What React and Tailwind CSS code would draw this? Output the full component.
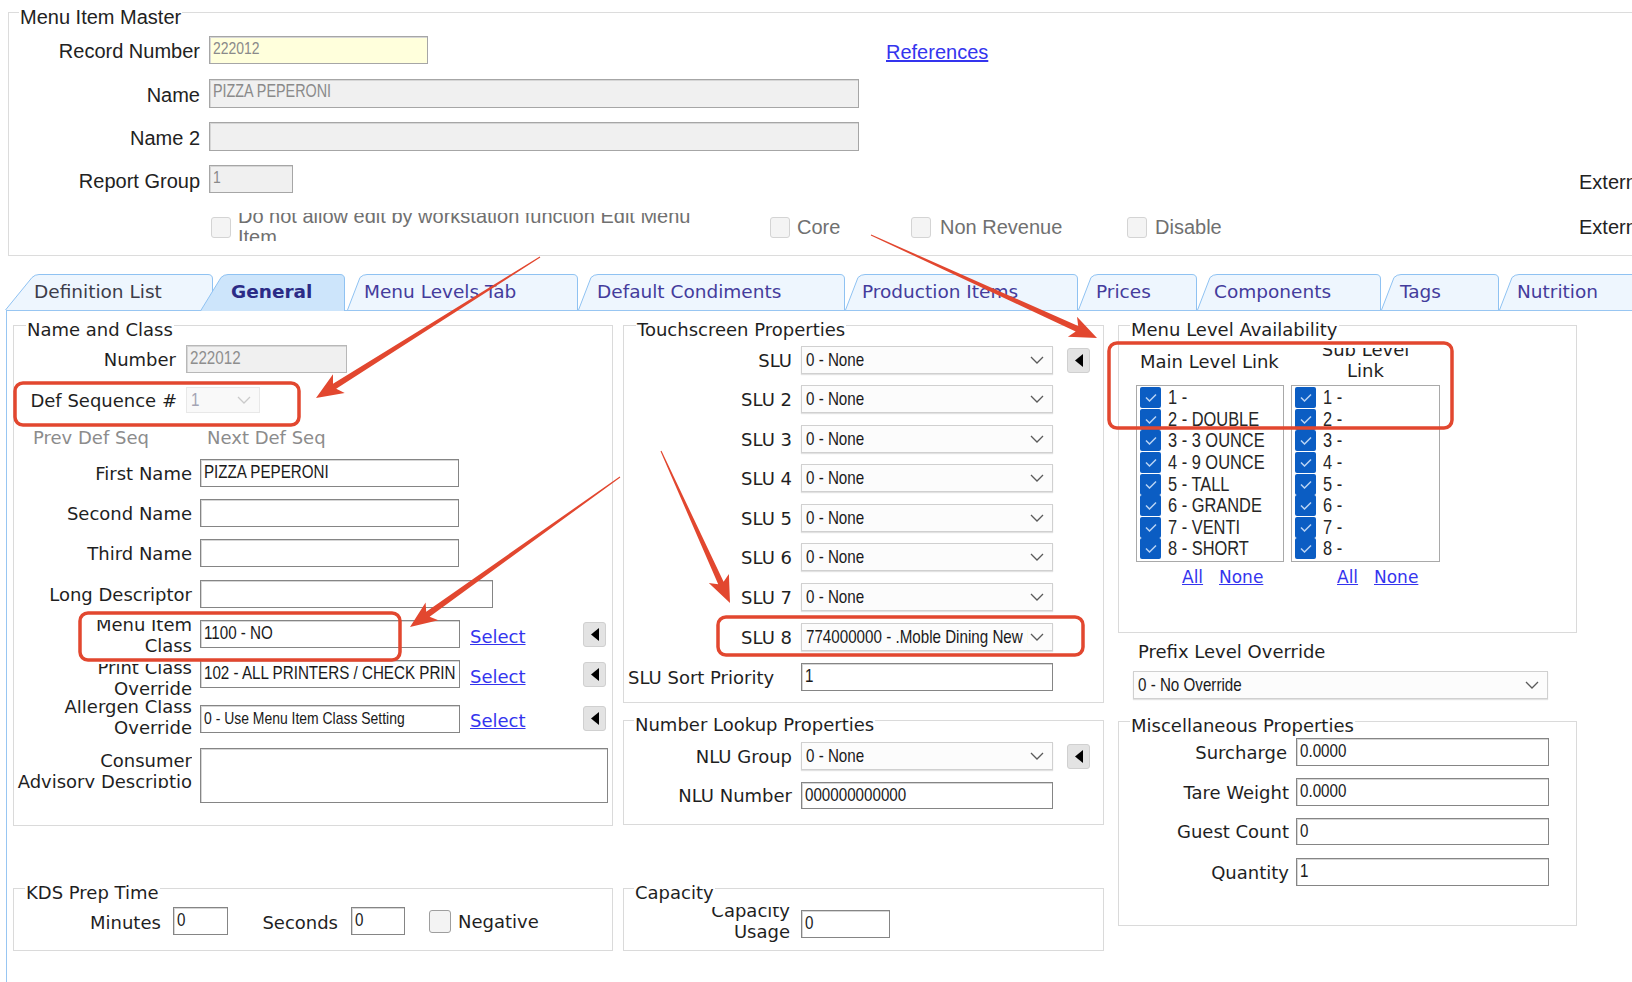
import React from "react";

// narrow face: Liberation Sans squeezed to Arial Narrow proportions
function Narrow({ children, className = "" }) {
  return (
    <span className={`inline-block origin-left scale-x-[0.82] whitespace-nowrap font-['Liberation_Sans',Arial,sans-serif] ${className}`}>
      {children}
    </span>
  );
}

function TextBox({ className = "", value = "", tone = "text-[#1a1a1a]", frame = "border-[#858585]", bg = "bg-white", size = "text-[18.5px]" }) {
  return (
    <div
      className={`shrink-0 overflow-hidden whitespace-nowrap border px-[3px] leading-[23px] shadow-[inset_1px_1px_0_#d6d6d6] ${frame} ${bg} ${tone} ${className}`}
    >
      <Narrow className={size}>{value}</Narrow>
    </div>
  );
}

function Combo({ className = "", value = "", disabled = false }) {
  return (
    <div
      className={`flex shrink-0 items-center border ${
        disabled
          ? "border-[#e8e8e8] bg-[#f9f9f9] text-[#a4a4b4]"
          : "border-[#d0d0d0] bg-[#fcfcfc] text-[#1a1a1a] shadow-[0_1px_1px_#e2e2e2]"
      } ${className}`}
    >
      <span className="min-w-0 flex-1 overflow-hidden whitespace-nowrap pl-[4px] leading-[24px]">
        <Narrow className="text-[18.5px]">{value}</Narrow>
      </span>
      <svg width="14" height="8" viewBox="0 0 14 8" className="ml-[2px] mr-[8px] shrink-0">
        <polyline points="1,1 7,7 13,1" fill="none" stroke={disabled ? "#cacaca" : "#5a5a5a"} strokeWidth="1.3" />
      </svg>
    </div>
  );
}

function ArrowBtn({ className = "" }) {
  return (
    <div
      className={`flex h-[25px] w-[23px] shrink-0 items-center justify-center rounded-[3px] border border-[#d0d0d0] bg-[#e3e3e3] ${className}`}
    >
      <svg width="8" height="13" viewBox="0 0 8 13">
        <polygon points="8,0 8,13 0,6.5" fill="#000" />
      </svg>
    </div>
  );
}

function Box({ className = "" }) {
  return <div className={`h-[21px] w-[20px] shrink-0 rounded-[3px] border border-[#d4d4d4] bg-[#f4f4f4] ${className}`} />;
}

function Group({ title, className = "", titleClass = "ml-[12px]", children }) {
  return (
    <div className={`border border-[#dadada] ${className}`}>
      <div className={`-mt-[7px] h-[22px] w-fit bg-white px-[1px] leading-[22px] ${titleClass}`}>{title}</div>
      {children}
    </div>
  );
}

function Link({ children, className = "" }) {
  return <span className={`text-[#3434ee] underline ${className}`}>{children}</span>;
}

const TABS = [
  { label: "Definition List", cls: "w-[208px]", pad: "pl-[29px] text-[#3d3d4a]", slant: 30, w: 208 },
  { label: "General", cls: "-ml-[13px] w-[145px]", pad: "pl-[31px] font-bold text-[#2b2b86]", slant: 24, w: 145, selected: true },
  { label: "Menu Levels Tab", cls: "ml-[2px] w-[231px]", pad: "pl-[17px] text-[#443c9c]", slant: 16, w: 231 },
  { label: "Default Condiments", cls: "w-[267px]", pad: "pl-[19px] text-[#443c9c]", slant: 16, w: 267 },
  { label: "Production Items", cls: "w-[233px]", pad: "pl-[17px] text-[#443c9c]", slant: 16, w: 233 },
  { label: "Prices", cls: "w-[119px]", pad: "pl-[18px] text-[#443c9c]", slant: 16, w: 119 },
  { label: "Components", cls: "w-[184px]", pad: "pl-[17px] text-[#443c9c]", slant: 16, w: 184 },
  { label: "Tags", cls: "w-[118px]", pad: "pl-[19px] text-[#443c9c]", slant: 16, w: 118 },
  { label: "Nutrition", cls: "w-[150px]", pad: "pl-[18px] text-[#443c9c]", slant: 16, w: 150 },
];

function Tab({ tab }) {
  const { w, slant: s, selected } = tab;
  const h = selected ? 37 : 36;
  const d = `M0.5,${h} L${s - 3},3.5 Q${s},0.5 ${s + 4},0.5 L${w - 5},0.5 Q${w - 0.5},0.5 ${w - 0.5},5 L${w - 0.5},${h}`;
  return (
    <div className={`relative h-[36px] shrink-0 ${tab.cls}`}>
      <svg className="absolute left-0 top-0" width={w} height={h} viewBox={`0 0 ${w} ${h}`}>
        <path d={d} fill={selected ? "#cde5fb" : "#eef6fe"} stroke="#8fc2f2" strokeWidth="1" />
      </svg>
      <div className={`relative whitespace-nowrap text-[18.5px] leading-[36px] ${tab.pad}`}>{tab.label}</div>
    </div>
  );
}

const MAIN_LEVELS = ["1 -", "2 - DOUBLE", "3 - 3 OUNCE", "4 - 9 OUNCE", "5 - TALL", "6 - GRANDE", "7 - VENTI", "8 - SHORT"];
const SUB_LEVELS = ["1 -", "2 -", "3 -", "4 -", "5 -", "6 -", "7 -", "8 -"];

function LevelList({ items, className = "" }) {
  return (
    <div className={`h-[177px] shrink-0 overflow-hidden border border-[#a9a9a9] pl-[3px] pt-[1px] ${className}`}>
      {items.map((it) => (
        <div key={it} className="flex h-[21.6px] items-center">
          <div className="flex h-[21px] w-[21px] shrink-0 items-center justify-center rounded-[2px] bg-[#0b5dc3]">
            <svg width="12" height="9" viewBox="0 0 12 9">
              <polyline points="1,4.5 4.5,8 11,1.5" fill="none" stroke="#b9d3f3" strokeWidth="1.5" />
            </svg>
          </div>
          <span className="ml-[7px] leading-[21px] text-[#262626]">
            <Narrow className="text-[20px]">{it}</Narrow>
          </span>
        </div>
      ))}
    </div>
  );
}

function TopSection() {
  return (
    <div className="ml-[8px] mt-[12px] h-[244px] w-[1700px] border border-[#dcdcdc] font-['Liberation_Sans',Arial,sans-serif] text-[20px] text-[#222]">
      <div className="-mt-[7px] ml-[10px] h-[22px] w-fit bg-white px-[1px] leading-[22px]">Menu Item Master</div>

      <div className="mt-[8px] flex h-[28px] items-center">
        <div className="w-[191px] pt-[2px] text-right leading-[22px]">Record Number</div>
        <TextBox className="ml-[9px] h-[28px] w-[219px] !leading-[20px]" size="text-[17px]" bg="bg-[#ffffdc]" frame="border-[#a6a6a6]" tone="text-[#8a8a8a]" value="222012" />
        <Link className="ml-[458px] pt-[4px] leading-[22px]">References</Link>
      </div>

      <div className="mt-[15px] flex h-[29px] items-center">
        <div className="w-[191px] pt-[2px] text-right leading-[22px]">Name</div>
        <TextBox className="ml-[9px] h-[29px] w-[650px] !leading-[20px]" size="text-[17.5px]" bg="bg-[#f0f0f0]" frame="border-[#a6a6a6]" tone="text-[#8a8a8a]" value="PIZZA PEPERONI" />
      </div>

      <div className="mt-[14px] flex h-[29px] items-center">
        <div className="w-[191px] pt-[2px] text-right leading-[22px]">Name 2</div>
        <TextBox className="ml-[9px] h-[29px] w-[650px]" bg="bg-[#f0f0f0]" frame="border-[#a6a6a6]" value="" />
      </div>

      <div className="mt-[14px] flex h-[28px] items-center">
        <div className="w-[191px] pt-[3px] text-right leading-[22px]">Report Group</div>
        <TextBox className="ml-[9px] h-[28px] w-[84px] !leading-[20px]" size="text-[17px]" bg="bg-[#f0f0f0]" frame="border-[#a6a6a6]" tone="text-[#8a8a8a]" value="1" />
        <div className="ml-[1286px] whitespace-nowrap pt-[5px] leading-[22px]">External</div>
      </div>

      <div className="mt-[23px] flex h-[22px] items-center">
        <Box className="ml-[202px]" />
        <div className="ml-[7px] flex h-[28px] w-[525px] shrink-0 flex-col justify-center overflow-hidden whitespace-nowrap text-[20px] leading-[21px] text-[#707070]">
          <div>Do not allow edit by workstation function Edit Menu</div>
          <div>Item</div>
        </div>
        <Box className="ml-[7px]" />
        <div className="ml-[7px] w-[107px] shrink-0 text-[#707070]">Core</div>
        <Box className="ml-[7px]" />
        <div className="ml-[9px] w-[180px] shrink-0 text-[#707070]">Non Revenue</div>
        <Box className="ml-[7px]" />
        <div className="ml-[8px] w-[424px] shrink-0 text-[#707070]">Disable</div>
        <div className="whitespace-nowrap">External</div>
      </div>
    </div>
  );
}

function ColumnOne() {
  return (
    <div className="ml-[6px] mt-[14px] w-[600px] shrink-0">
      <Group title="Name and Class" className="h-[501px]">
        <div className="mt-[4px] flex h-[28px] items-center">
          <div className="w-[162px] text-right">Number</div>
          <TextBox className="ml-[10px] h-[28px] w-[161px]" bg="bg-[#f0f0f0]" frame="border-[#b8b8b8]" tone="text-[#8e8e8e]" value="222012" />
        </div>
        <div className="mt-[14px] flex h-[26px] items-center">
          <div className="w-[163px] text-right">Def Sequence #</div>
          <Combo className="ml-[9px] h-[26px] w-[74px]" value="1" disabled />
        </div>
        <div className="mt-[13px] flex h-[22px] items-center text-[#8c8c8c]">
          <div className="ml-[19px] w-[174px]">Prev Def Seq</div>
          <div>Next Def Seq</div>
        </div>
        <div className="mt-[11px] flex h-[28px] items-center">
          <div className="w-[178px] text-right">First Name</div>
          <TextBox className="ml-[8px] h-[28px] w-[259px]" value="PIZZA PEPERONI" />
        </div>
        <div className="mt-[12px] flex h-[28px] items-center">
          <div className="w-[178px] text-right">Second Name</div>
          <TextBox className="ml-[8px] h-[28px] w-[259px]" value="" />
        </div>
        <div className="mt-[12px] flex h-[28px] items-center">
          <div className="w-[178px] text-right">Third Name</div>
          <TextBox className="ml-[8px] h-[28px] w-[259px]" value="" />
        </div>
        <div className="mt-[13px] flex h-[28px] items-center">
          <div className="w-[178px] text-right">Long Descriptor</div>
          <TextBox className="ml-[8px] h-[28px] w-[293px]" value="" />
        </div>

        <div className="mt-[12px] flex h-[28px] items-start">
          <div className="mt-[0px] flex h-[36px] w-[178px] shrink-0 flex-col justify-end overflow-hidden text-right leading-[21px]">
            <div>Menu Item</div>
            <div>Class</div>
          </div>
          <TextBox className="ml-[8px] h-[28px] w-[260px]" value="1100 - NO" />
          <div className="w-[123px] shrink-0 pl-[10px] pt-[6px] leading-[22px]">
            <Link>Select</Link>
          </div>
          <ArrowBtn className="mt-[2px]" />
        </div>

        <div className="mt-[12px] flex h-[28px] items-start">
          <div className="mt-[4px] flex h-[35px] w-[178px] shrink-0 flex-col justify-end overflow-hidden text-right leading-[21px]">
            <div>Print Class</div>
            <div>Override</div>
          </div>
          <TextBox className="ml-[8px] h-[28px] w-[260px]" value="102 - ALL PRINTERS / CHECK PRIN" />
          <div className="w-[123px] shrink-0 pl-[10px] pt-[6px] leading-[22px]">
            <Link>Select</Link>
          </div>
          <ArrowBtn className="mt-[2px]" />
        </div>

        <div className="mt-[17px] flex h-[28px] items-start">
          <div className="-mt-[5px] flex h-[38px] w-[178px] shrink-0 flex-col justify-end overflow-hidden text-right leading-[21px]">
            <div>Allergen Class</div>
            <div>Override</div>
          </div>
          <TextBox className="ml-[8px] h-[28px] w-[260px]" size="text-[17px]" value="0 - Use Menu Item Class Setting" />
          <div className="w-[123px] shrink-0 pl-[10px] pt-[5px] leading-[22px]">
            <Link>Select</Link>
          </div>
          <ArrowBtn className="mt-[1px]" />
        </div>

        <div className="mt-[15px] flex h-[55px] items-start">
          <div className="mt-[6px] flex h-[34px] w-[178px] shrink-0 flex-col justify-center overflow-hidden whitespace-nowrap text-right leading-[21px]">
            <div>Consumer</div>
            <div>Advisory Descriptio</div>
          </div>
          <TextBox className="ml-[8px] h-[55px] w-[408px]" value="" />
        </div>
      </Group>

      <Group title="KDS Prep Time" className="mt-[62px] h-[63px]" titleClass="ml-[11px]">
        <div className="mt-[3px] flex h-[28px] items-center">
          <div className="ml-[76px] w-[70px] shrink-0 pt-[3px] text-right">Minutes</div>
          <TextBox className="ml-[13px] h-[28px] w-[55px]" value="0" />
          <div className="ml-[32px] w-[78px] shrink-0 pt-[3px] text-right">Seconds</div>
          <TextBox className="ml-[13px] h-[28px] w-[54px]" value="0" />
          <div className="ml-[24px] h-[23px] w-[22px] shrink-0 rounded-[3px] border border-[#9e9e9e] bg-[#f3f3f3]" />
          <div className="ml-[7px]">Negative</div>
        </div>
      </Group>
    </div>
  );
}

const SLU_ROWS = [
  { label: "SLU", mt: "mt-[5px]", value: "0 - None", btn: true },
  { label: "SLU 2", mt: "mt-[11px]", value: "0 - None" },
  { label: "SLU 3", mt: "mt-[12px]", value: "0 - None" },
  { label: "SLU 4", mt: "mt-[11px]", value: "0 - None" },
  { label: "SLU 5", mt: "mt-[12px]", value: "0 - None" },
  { label: "SLU 6", mt: "mt-[11px]", value: "0 - None" },
  { label: "SLU 7", mt: "mt-[12px]", value: "0 - None" },
  { label: "SLU 8", mt: "mt-[12px]", value: "774000000 - .Moble Dining New Item" },
];

function ColumnTwo() {
  return (
    <div className="ml-[10px] mt-[14px] w-[481px] shrink-0">
      <Group title="Touchscreen Properties" className="h-[378px]">
        {SLU_ROWS.map((r) => (
          <div key={r.label} className={`flex h-[28px] items-center ${r.mt}`}>
            <div className="w-[168px] shrink-0 text-right">{r.label}</div>
            <Combo className="ml-[9px] h-[28px] w-[252px]" value={r.value} />
            {r.btn && <ArrowBtn className="ml-[14px]" />}
          </div>
        ))}
        <div className="mt-[12px] flex h-[28px] items-center">
          <div className="ml-[4px] w-[164px] shrink-0 whitespace-nowrap">SLU Sort Priority</div>
          <TextBox className="ml-[9px] h-[28px] w-[252px]" value="1" />
        </div>
      </Group>

      <Group title="Number Lookup Properties" className="mt-[17px] h-[105px]" titleClass="ml-[10px]">
        <div className="mt-[6px] flex h-[28px] items-center">
          <div className="w-[168px] shrink-0 text-right">NLU Group</div>
          <Combo className="ml-[9px] h-[28px] w-[252px]" value="0 - None" />
          <ArrowBtn className="ml-[14px]" />
        </div>
        <div className="mt-[12px] flex h-[27px] items-center">
          <div className="w-[168px] shrink-0 text-right">NLU Number</div>
          <TextBox className="ml-[9px] h-[27px] w-[252px]" value="000000000000" />
        </div>
      </Group>

      <Group title="Capacity" className="mt-[63px] h-[63px]" titleClass="ml-[10px]">
        <div className="mt-[6px] flex h-[28px] items-start">
          <div className="-mt-[3px] flex h-[35px] w-[166px] shrink-0 flex-col justify-end overflow-hidden text-right leading-[21px]">
            <div>Capacity</div>
            <div>Usage</div>
          </div>
          <TextBox className="ml-[11px] h-[28px] w-[89px]" value="0" />
        </div>
      </Group>
    </div>
  );
}

function ColumnThree() {
  return (
    <div className="ml-[14px] mt-[14px] w-[459px] shrink-0">
      <Group title="Menu Level Availability" className="h-[308px]" titleClass="ml-[11px]">
        <div className="flex h-[44px] items-start">
          <div className="ml-[21px] mt-[10px] w-[151px] shrink-0 whitespace-nowrap leading-[21px]">Main Level Link</div>
          <div className="mt-[7px] flex h-[33px] w-[149px] shrink-0 flex-col justify-end overflow-hidden text-center leading-[21px]">
            <div>Sub Level</div>
            <div>Link</div>
          </div>
        </div>
        <div className="flex">
          <LevelList items={MAIN_LEVELS} className="ml-[17px] w-[148px]" />
          <LevelList items={SUB_LEVELS} className="ml-[7px] w-[149px]" />
        </div>
        <div className="mt-[5px] flex h-[22px] items-center text-[17px]">
          <div className="ml-[63px] w-[37px] shrink-0"><Link>All</Link></div>
          <div className="w-[118px] shrink-0"><Link>None</Link></div>
          <div className="w-[37px] shrink-0"><Link>All</Link></div>
          <div className="shrink-0"><Link>None</Link></div>
        </div>
      </Group>

      <div className="ml-[20px] mt-[8px] h-[22px] leading-[22px]">Prefix Level Override</div>
      <Combo className="ml-[15px] mt-[8px] h-[28px] w-[415px]" value="0 - No Override" />

      <Group title="Miscellaneous Properties" className="mt-[22px] h-[205px]" titleClass="ml-[11px]">
        <div className="mt-[1px] flex h-[28px] items-center">
          <div className="w-[168px] shrink-0 text-right">Surcharge</div>
          <TextBox className="ml-[9px] h-[28px] w-[253px]" value="0.0000" />
        </div>
        <div className="mt-[12px] flex h-[28px] items-center">
          <div className="w-[170px] shrink-0 text-right">Tare Weight</div>
          <TextBox className="ml-[7px] h-[28px] w-[253px]" value="0.0000" />
        </div>
        <div className="mt-[12px] flex h-[27px] items-center">
          <div className="w-[170px] shrink-0 text-right">Guest Count</div>
          <TextBox className="ml-[7px] h-[27px] w-[253px]" value="0" />
        </div>
        <div className="mt-[13px] flex h-[28px] items-center">
          <div className="w-[170px] shrink-0 text-right">Quantity</div>
          <TextBox className="ml-[7px] h-[28px] w-[253px]" value="1" />
        </div>
      </Group>
    </div>
  );
}

function arrowPoints(x1, y1, x2, y2) {
  const dx = x2 - x1;
  const dy = y2 - y1;
  const len = Math.hypot(dx, dy);
  const ux = dx / len;
  const uy = dy / len;
  const nx = -uy;
  const ny = ux;
  const hl = 27;
  const hw = 11;
  const sw = 3;
  const tw = 0.6;
  const bx = x2 - ux * hl;
  const by = y2 - uy * hl;
  const nbx = x2 - ux * (hl - 5);
  const nby = y2 - uy * (hl - 5);
  const pts = [
    [x1 + nx * tw, y1 + ny * tw],
    [nbx + nx * sw, nby + ny * sw],
    [bx + nx * hw, by + ny * hw],
    [x2, y2],
    [bx - nx * hw, by - ny * hw],
    [nbx - nx * sw, nby - ny * sw],
    [x1 - nx * tw, y1 - ny * tw],
  ];
  return pts.map((p) => p.map((v) => v.toFixed(1)).join(",")).join(" ");
}

const ARROWS = [
  [540, 257, 316, 398],
  [871, 235, 1097, 338],
  [620, 477, 410, 627],
  [661, 451, 730, 603],
];

function Annotations() {
  return (
    <svg className="pointer-events-none absolute left-0 top-0 z-20" width="1632" height="982" viewBox="0 0 1632 982">
      <g fill="none" stroke="#e2472f" strokeWidth="3.5">
        <rect x="15" y="383" width="284" height="42" rx="8" />
        <rect x="80" y="613" width="320" height="47" rx="8" />
        <rect x="718" y="617" width="365" height="38" rx="8" />
        <rect x="1109" y="343" width="343" height="85" rx="8" />
      </g>
      {ARROWS.map((a, i) => (
        <polygon key={i} points={arrowPoints(...a)} fill="#e2472f" />
      ))}
    </svg>
  );
}

export default function App() {
  return (
    <div className="relative h-[982px] w-[1632px] overflow-hidden bg-white text-[#1f1f1f]">
      <TopSection />
      <div className="font-['DejaVu_Sans',sans-serif] text-[18px]">
        <div className="relative z-10 ml-[5px] mt-[18px] flex h-[36px]">
          {TABS.map((t) => (
            <Tab key={t.label} tab={t} />
          ))}
        </div>
        <div className="ml-[6px] flex h-[672px] items-start border-l border-t border-[#98c6f2]">
          <ColumnOne />
          <ColumnTwo />
          <ColumnThree />
        </div>
      </div>
      <Annotations />
    </div>
  );
}
